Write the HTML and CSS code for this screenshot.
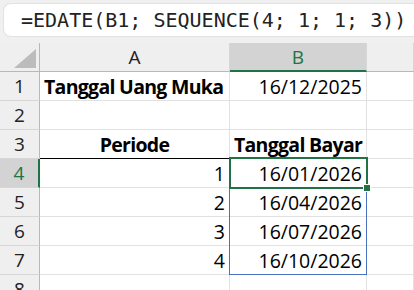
FILE: index.html
```html
<!DOCTYPE html>
<html>

<head>
    <title>EDATE SEQUENCE</title>
    <link rel="stylesheet" href="styles.css">
</head>

<body>
    <div class="formula-bar">=EDATE(B1; SEQUENCE(4; 1; 1; 3))</div>

    <div class="sheet">
        <!-- column headers -->
        <div class="corner">
            <svg width="22" height="19" viewBox="0 0 22 19"><polygon points="22,0 22,19 0,19" fill="#bcbcbc"/></svg>
        </div>
        <div class="col-head">A</div>
        <div class="col-head active">B</div>
        <div class="col-head"></div>

        <div class="row-head">1</div>
        <div class="cell bold">Tanggal Uang Muka</div>
        <div class="cell num">16/12/2025</div>
        <div class="cell"></div>

        <div class="row-head">2</div>
        <div class="cell"></div>
        <div class="cell"></div>
        <div class="cell"></div>

        <div class="row-head">3</div>
        <div class="cell bold center underline">Periode</div>
        <div class="cell bold center">Tanggal Bayar</div>
        <div class="cell"></div>

        <div class="row-head active">4</div>
        <div class="cell num">1</div>
        <div class="cell num">16/01/2026</div>
        <div class="cell"></div>

        <div class="row-head">5</div>
        <div class="cell num">2</div>
        <div class="cell num">16/04/2026</div>
        <div class="cell"></div>

        <div class="row-head">6</div>
        <div class="cell num">3</div>
        <div class="cell num">16/07/2026</div>
        <div class="cell"></div>

        <div class="row-head">7</div>
        <div class="cell num">4</div>
        <div class="cell num">16/10/2026</div>
        <div class="cell"></div>

        <div class="row-head">8</div>
        <div class="cell"></div>
        <div class="cell"></div>
        <div class="cell"></div>

        <!-- selection overlays -->
        <div class="spill-range"></div>
        <div class="active-cell"><span class="fill-handle"></span></div>
    </div>
</body>

</html>
```

FILE: styles.css
```css
/* spreadsheet screenshot */
body {
    background-color: #f0f0f0;
    margin: 0;
    padding: 0;
    font-family: "Open Sans", Arial, sans-serif;
    overflow: hidden;
}

.formula-bar {
    margin: 3px 0 6px 3px;
    height: 34px;
    box-sizing: border-box;
    background-color: #ffffff;
    border: 1px solid #e2e2e2;
    border-right: none;
    border-radius: 8px 0 0 8px;
    padding-left: 17px;
    font-family: "DejaVu Sans Mono", monospace;
    font-size: 20px;
    line-height: 32px;
    color: #222222;
    white-space: nowrap;
}

.sheet {
    position: relative;
    display: grid;
    grid-template-columns: 40px 190px 137px 1fr;
    grid-auto-rows: 29px;
    background-color: #ffffff;
}

.corner,
.col-head,
.row-head {
    background-color: #efefef;
    box-sizing: border-box;
    border-right: 1px solid #d6d6d6;
    border-bottom: 1px solid #b8b8b8;
    color: #222222;
    font-size: 19px;
    display: flex;
    align-items: center;
    justify-content: center;
}

.corner {
    align-items: flex-end;
    justify-content: flex-end;
    padding: 0 3px 3px 0;
    border-right: 1px solid #b8b8b8;
}

.col-head.active {
    background-color: #d3d3d3;
    color: #217346;
    border-bottom: 2px solid #217346;
}

.row-head {
    border-right: 1px solid #b8b8b8;
    border-bottom: 1px solid #d6d6d6;
}

.row-head.active {
    background-color: #d3d3d3;
    color: #217346;
    border-right: 2px solid #217346;
}

.cell {
    box-sizing: border-box;
    border-right: 1px solid #e1e1e1;
    border-bottom: 1px solid #e1e1e1;
    font-size: 19.5px;
    color: #000000;
    padding: 0 4px;
    display: flex;
    align-items: center;
    white-space: nowrap;
}

.bold {
    font-weight: bold;
    letter-spacing: -0.7px;
}

.num {
    justify-content: flex-end;
}

.center {
    justify-content: center;
}

.underline {
    border-bottom: 1px solid #000000;
}

.spill-range {
    position: absolute;
    grid-column: 3 / 4;
    grid-row: 5 / 9;
    top: -1px;
    left: -1px;
    right: 0;
    bottom: 0;
    border: 1px solid #4a72c0;
}

.active-cell {
    position: absolute;
    grid-column: 3 / 4;
    grid-row: 5 / 6;
    top: -2px;
    left: -1px;
    right: -1px;
    bottom: -1px;
    border: 2px solid #217346;
}

.fill-handle {
    position: absolute;
    right: -5px;
    bottom: -5px;
    width: 6px;
    height: 6px;
    background-color: #217346;
    border: 1px solid #ffffff;
}
```
